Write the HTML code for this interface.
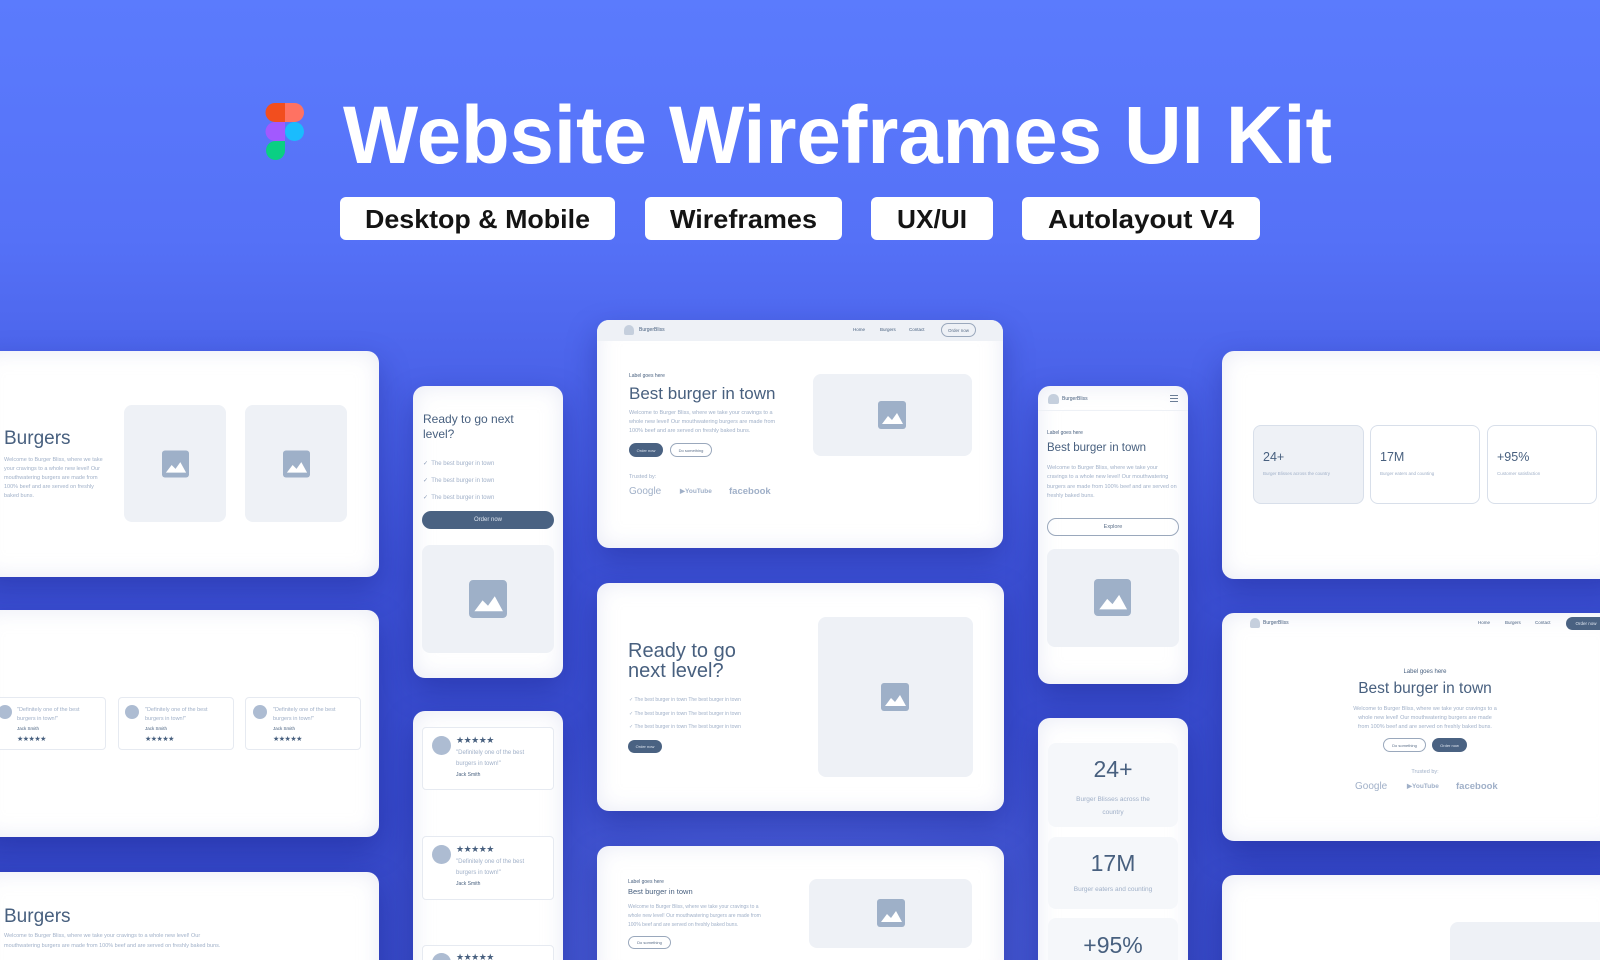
<!DOCTYPE html>
<html><head><meta charset="utf-8"><style>
*{margin:0;padding:0;box-sizing:border-box}
html,body{width:1600px;height:960px;overflow:hidden}
body{font-family:"Liberation Sans",sans-serif;background:#3a4bd0}
#w{position:absolute;left:0;top:0;width:1600px;height:960px;overflow:hidden;
background:radial-gradient(ellipse 500px 260px at 800px 960px,rgba(110,130,240,.5),rgba(0,0,0,0)),linear-gradient(180deg,#5b7bfd 0%,#5571f7 25%,#4a62e8 40%,#3c50d4 60%,#3345c4 100%)}
.a{position:absolute}
.c{position:absolute;background:#fff;border-radius:12px;box-shadow:inset 0 0 22px rgba(190,196,225,.35),0 12px 30px rgba(20,30,130,.35);overflow:hidden}
.ph{position:absolute;background:#eef1f6;border-radius:8px}
.t{position:absolute;white-space:nowrap;line-height:1}
.d{color:#48607f}
.l{color:#a0b0c8}
.btn{position:absolute;background:#4a6282;border-radius:20px;color:#dfe6f0;font-size:5px;display:flex;align-items:center;justify-content:center}
.ob{position:absolute;border:1px solid #9aa8bc;border-radius:20px;color:#5a6e88;font-size:5px;display:flex;align-items:center;justify-content:center}
.box{position:absolute;border:1px solid #e6eaf1;border-radius:4px;background:#fff}
.av{position:absolute;border-radius:50%;background:#adbcd2}
.pill{position:absolute;background:#fff;border-radius:6px;top:197px;height:43px}
</style></head><body><div id="w">

<svg class="a" style="left:265px;top:103px" width="40" height="58" viewBox="0 0 40 58">
<path d="M10 0H20V19H10A9.5 9.5 0 0 1 10 0Z" fill="#f24e1e"/>
<path d="M20 0H29.5A9.5 9.5 0 0 1 29.5 19H20Z" fill="#ff7262"/>
<path d="M10 19H20V38H10A9.5 9.5 0 0 1 10 19Z" fill="#a259ff"/>
<circle cx="29.5" cy="28.5" r="9.5" fill="#1abcfe"/>
<path d="M10 38H20V48A9.5 9.5 0 1 1 10 38Z" fill="#0acf83"/>
</svg>
<svg class="a" style="left:0;top:0" width="1600" height="260">
<text x="343" y="163" font-family="Liberation Sans" font-weight="bold" font-size="82" fill="#fff" textLength="989" lengthAdjust="spacingAndGlyphs">Website Wireframes UI Kit</text>
</svg>
<div class="pill" style="left:340px;width:275px"></div>
<div class="pill" style="left:645px;width:197px"></div>
<div class="pill" style="left:871px;width:122px"></div>
<div class="pill" style="left:1022px;width:238px"></div>
<svg class="a" style="left:0;top:0" width="1600" height="260" font-family="Liberation Sans" font-weight="bold" font-size="26" fill="#141414">
<text x="365" y="228" textLength="225" lengthAdjust="spacingAndGlyphs">Desktop &amp; Mobile</text>
<text x="670" y="228" textLength="147" lengthAdjust="spacingAndGlyphs">Wireframes</text>
<text x="897" y="228" textLength="70" lengthAdjust="spacingAndGlyphs">UX/UI</text>
<text x="1048" y="228" textLength="186" lengthAdjust="spacingAndGlyphs">Autolayout V4</text>
</svg>

<div class="c" style="left:-20px;top:351px;width:399px;height:226px"></div>
<div class="c" style="left:-20px;top:610px;width:399px;height:227px"></div>
<div class="c" style="left:-20px;top:872px;width:399px;height:120px"></div>
<div class="c" style="left:413px;top:386px;width:150px;height:292px"></div>
<div class="c" style="left:413px;top:711px;width:150px;height:280px"></div>
<div class="c" style="left:597px;top:320px;width:406px;height:228px"></div>
<div class="c" style="left:597px;top:583px;width:407px;height:228px"></div>
<div class="c" style="left:597px;top:846px;width:407px;height:140px"></div>
<div class="c" style="left:1038px;top:386px;width:150px;height:298px"></div>
<div class="c" style="left:1038px;top:718px;width:150px;height:270px"></div>
<div class="c" style="left:1222px;top:351px;width:400px;height:228px"></div>
<div class="c" style="left:1222px;top:613px;width:400px;height:228px"></div>
<div class="c" style="left:1222px;top:875px;width:400px;height:120px"></div>

<div class="t d" style="left:4px;top:429px;font-size:19px">Burgers</div>
<div class="t l" style="left:4px;top:456px;font-size:5.5px;line-height:9px;white-space:normal;width:104px">Welcome to Burger Bliss, where we take your cravings to a whole new level! Our mouthwatering burgers are made from 100% beef and are served on freshly baked buns.</div>
<div class="ph" style="left:124px;top:405px;width:102px;height:117px"></div>
<div class="ph" style="left:245px;top:405px;width:102px;height:117px"></div>
<svg class="a" style="left:162px;top:450px" width="27" height="28" viewBox="0 0 28 28"><rect width="28" height="28" rx="3" fill="#9eb0c8"/><path d="M4 23L10 15L14 19L19 12L25 23Z" fill="#fff"/></svg>
<svg class="a" style="left:283px;top:450px" width="27" height="28" viewBox="0 0 28 28"><rect width="28" height="28" rx="3" fill="#9eb0c8"/><path d="M4 23L10 15L14 19L19 12L25 23Z" fill="#fff"/></svg>

<div class="box" style="left:-10px;top:697px;width:116px;height:53px"></div>
<div class="box" style="left:118px;top:697px;width:116px;height:53px"></div>
<div class="box" style="left:245px;top:697px;width:116px;height:53px"></div>
<div class="av" style="left:-2px;top:705px;width:14px;height:14px"></div>
<div class="av" style="left:125px;top:705px;width:14px;height:14px"></div>
<div class="av" style="left:253px;top:705px;width:14px;height:14px"></div>
<div class="t l" style="left:17px;top:706px;font-size:5.5px;line-height:9px">"Definitely one of the best<br>burgers in town!"</div>
<div class="t l" style="left:145px;top:706px;font-size:5.5px;line-height:9px">"Definitely one of the best<br>burgers in town!"</div>
<div class="t l" style="left:273px;top:706px;font-size:5.5px;line-height:9px">"Definitely one of the best<br>burgers in town!"</div>
<div class="t d" style="left:17px;top:727px;font-size:4.5px">Jack Smith</div>
<div class="t d" style="left:145px;top:727px;font-size:4.5px">Jack Smith</div>
<div class="t d" style="left:273px;top:727px;font-size:4.5px">Jack Smith</div>
<div class="t d" style="left:17px;top:736px;font-size:7px;letter-spacing:-.5px">★★★★★</div>
<div class="t d" style="left:145px;top:736px;font-size:7px;letter-spacing:-.5px">★★★★★</div>
<div class="t d" style="left:273px;top:736px;font-size:7px;letter-spacing:-.5px">★★★★★</div>

<div class="t d" style="left:4px;top:907px;font-size:19px">Burgers</div>
<div class="t l" style="left:4px;top:932px;font-size:5.5px;line-height:9.5px;white-space:normal;width:226px">Welcome to Burger Bliss, where we take your cravings to a whole new level! Our mouthwatering burgers are made from 100% beef and are served on freshly baked buns.</div>

<div class="t d" style="left:423px;top:412px;font-size:12px;line-height:15px">Ready to go next<br>level?</div>
<div class="t l" style="left:423px;top:456px;font-size:6px;line-height:17px"><span style="color:#8a9cb6">✓</span>&nbsp; The best burger in town<br><span style="color:#8a9cb6">✓</span>&nbsp; The best burger in town<br><span style="color:#8a9cb6">✓</span>&nbsp; The best burger in town</div>
<div class="btn" style="left:422px;top:511px;width:132px;height:18px;font-size:6px">Order now</div>
<div class="ph" style="left:422px;top:545px;width:132px;height:108px"></div>
<svg class="a" style="left:469px;top:580px" width="38" height="38" viewBox="0 0 28 28"><rect width="28" height="28" rx="3" fill="#9eb0c8"/><path d="M4 23L10 15L14 19L19 12L25 23Z" fill="#fff"/></svg>

<div class="box" style="left:422px;top:727px;width:132px;height:63px"></div>
<div class="box" style="left:422px;top:836px;width:132px;height:64px"></div>
<div class="box" style="left:422px;top:945px;width:132px;height:40px"></div>
<div class="av" style="left:432px;top:736px;width:19px;height:19px"></div>
<div class="av" style="left:432px;top:845px;width:19px;height:19px"></div>
<div class="av" style="left:432px;top:953px;width:19px;height:19px"></div>
<div class="t d" style="left:456px;top:736px;font-size:9px;letter-spacing:-.5px">★★★★★</div>
<div class="t d" style="left:456px;top:845px;font-size:9px;letter-spacing:-.5px">★★★★★</div>
<div class="t d" style="left:456px;top:953px;font-size:9px;letter-spacing:-.5px">★★★★★</div>
<div class="t l" style="left:456px;top:748px;font-size:6px;line-height:11px">"Definitely one of the best<br>burgers in town!"</div>
<div class="t l" style="left:456px;top:857px;font-size:6px;line-height:11px">"Definitely one of the best<br>burgers in town!"</div>
<div class="t d" style="left:456px;top:773px;font-size:5px">Jack Smith</div>
<div class="t d" style="left:456px;top:882px;font-size:5px">Jack Smith</div>

<div class="a" style="left:597px;top:320px;width:406px;height:21px;background:#eef1f6;border-radius:12px 12px 0 0"></div>
<div class="a" style="left:624px;top:325px;width:10px;height:10px;border-radius:5px 5px 2px 2px;background:#c5cfdd"></div>
<div class="t d" style="left:639px;top:328px;font-size:5px">BurgerBliss</div>
<div class="t d" style="left:853px;top:328px;font-size:4.5px">Home</div>
<div class="t d" style="left:880px;top:328px;font-size:4.5px">Burgers</div>
<div class="t d" style="left:909px;top:328px;font-size:4.5px">Contact</div>
<div class="ob" style="left:941px;top:323px;width:35px;height:14px;font-size:4.5px">Order now</div>
<div class="t d" style="left:629px;top:374px;font-size:5px">Label goes here</div>
<div class="t d" style="left:629px;top:385px;font-size:17px">Best burger in town</div>
<div class="t l" style="left:629px;top:409px;font-size:5.5px;line-height:9px">Welcome to Burger Bliss, where we take your cravings to a<br>whole new level! Our mouthwatering burgers are made from<br>100% beef and are served on freshly baked buns.</div>
<div class="btn" style="left:629px;top:443px;width:34px;height:14px;font-size:4px">Order now</div>
<div class="ob" style="left:670px;top:443px;width:42px;height:14px;font-size:4px">Do something</div>
<div class="t l" style="left:629px;top:475px;font-size:5.5px">Trusted by:</div>
<div class="t l" style="left:629px;top:487px;font-size:10px">Google</div>
<div class="t l" style="left:680px;top:489px;font-size:6.5px;font-weight:bold">▶YouTube</div>
<div class="t l" style="left:729px;top:487px;font-size:9.5px;font-weight:bold">facebook</div>
<div class="ph" style="left:813px;top:374px;width:159px;height:82px"></div>
<svg class="a" style="left:878px;top:401px" width="28" height="28" viewBox="0 0 28 28"><rect width="28" height="28" rx="3" fill="#9eb0c8"/><path d="M4 23L10 15L14 19L19 12L25 23Z" fill="#fff"/></svg>

<div class="t d" style="left:628px;top:641px;font-size:20px;line-height:20px">Ready to go<br>next level?</div>
<div class="t l" style="left:629px;top:694px;font-size:5px;line-height:13.5px">✓ The best burger in town The best burger in town<br>✓ The best burger in town The best burger in town<br>✓ The best burger in town The best burger in town</div>
<div class="btn" style="left:628px;top:740px;width:34px;height:13px;font-size:4px">Order now</div>
<div class="ph" style="left:818px;top:617px;width:155px;height:160px"></div>
<svg class="a" style="left:881px;top:683px" width="28" height="28" viewBox="0 0 28 28"><rect width="28" height="28" rx="3" fill="#9eb0c8"/><path d="M4 23L10 15L14 19L19 12L25 23Z" fill="#fff"/></svg>

<div class="t d" style="left:628px;top:880px;font-size:5px">Label goes here</div>
<div class="t d" style="left:628px;top:888px;font-size:7.5px">Best burger in town</div>
<div class="t l" style="left:628px;top:903px;font-size:5px;line-height:9px">Welcome to Burger Bliss, where we take your cravings to a<br>whole new level! Our mouthwatering burgers are made from<br>100% beef and are served on freshly baked buns.</div>
<div class="ob" style="left:628px;top:936px;width:43px;height:13px;font-size:4px">Do something</div>
<div class="ph" style="left:809px;top:879px;width:163px;height:69px"></div>
<svg class="a" style="left:877px;top:899px" width="28" height="28" viewBox="0 0 28 28"><rect width="28" height="28" rx="3" fill="#9eb0c8"/><path d="M4 23L10 15L14 19L19 12L25 23Z" fill="#fff"/></svg>

<div class="a" style="left:1048px;top:394px;width:11px;height:10px;border-radius:5px 5px 2px 2px;background:#c5cfdd"></div>
<div class="t d" style="left:1062px;top:397px;font-size:5px">BurgerBliss</div>
<div class="a" style="left:1170px;top:395px;width:8px;height:7px;border-top:1px solid #6a7d96;border-bottom:1px solid #6a7d96"></div>
<div class="a" style="left:1170px;top:398px;width:8px;height:1px;background:#6a7d96"></div>
<div class="a" style="left:1038px;top:410px;width:150px;height:1px;background:#eef1f6"></div>
<div class="t d" style="left:1047px;top:431px;font-size:5px">Label goes here</div>
<div class="t d" style="left:1047px;top:443px;font-size:11.5px">Best burger in town</div>
<div class="t l" style="left:1047px;top:464px;font-size:5.5px;line-height:9.3px;white-space:normal;width:132px">Welcome to Burger Bliss, where we take your cravings to a whole new level! Our mouthwatering burgers are made from 100% beef and are served on freshly baked buns.</div>
<div class="ob" style="left:1047px;top:518px;width:132px;height:18px;font-size:5.5px">Explore</div>
<div class="ph" style="left:1047px;top:549px;width:132px;height:98px"></div>
<svg class="a" style="left:1094px;top:579px" width="37" height="37" viewBox="0 0 28 28"><rect width="28" height="28" rx="3" fill="#9eb0c8"/><path d="M4 23L10 15L14 19L19 12L25 23Z" fill="#fff"/></svg>

<div class="ph" style="left:1048px;top:743px;width:130px;height:84px;background:#f5f7fa"></div>
<div class="ph" style="left:1048px;top:837px;width:130px;height:72px;background:#f5f7fa"></div>
<div class="ph" style="left:1048px;top:918px;width:130px;height:60px;background:#f5f7fa"></div>
<div class="t d" style="left:1048px;width:130px;text-align:center;top:758px;font-size:23px">24+</div>
<div class="t l" style="left:1048px;width:130px;text-align:center;top:793px;font-size:6.5px;line-height:13px">Burger Blisses across the<br>country</div>
<div class="t d" style="left:1048px;width:130px;text-align:center;top:852px;font-size:23px">17M</div>
<div class="t l" style="left:1048px;width:130px;text-align:center;top:887px;font-size:6.5px">Burger eaters and counting</div>
<div class="t d" style="left:1048px;width:130px;text-align:center;top:934px;font-size:23px">+95%</div>

<div class="ph" style="left:1253px;top:425px;width:111px;height:79px;border:1px solid #d8dfea"></div>
<div class="a" style="left:1370px;top:425px;width:110px;height:79px;border:1px solid #d8dfea;border-radius:8px"></div>
<div class="a" style="left:1487px;top:425px;width:110px;height:79px;border:1px solid #d8dfea;border-radius:8px"></div>
<div class="t d" style="left:1263px;top:451px;font-size:12.5px">24+</div>
<div class="t d" style="left:1380px;top:451px;font-size:12.5px">17M</div>
<div class="t d" style="left:1497px;top:451px;font-size:12.5px">+95%</div>
<div class="t l" style="left:1263px;top:472px;font-size:4.5px">Burger Blisses across the country</div>
<div class="t l" style="left:1380px;top:472px;font-size:4.5px">Burger eaters and counting</div>
<div class="t l" style="left:1497px;top:472px;font-size:4.5px">Customer satisfaction</div>

<div class="a" style="left:1250px;top:618px;width:10px;height:10px;border-radius:5px 5px 2px 2px;background:#c5cfdd"></div>
<div class="t d" style="left:1263px;top:621px;font-size:5px">BurgerBliss</div>
<div class="t d" style="left:1478px;top:621px;font-size:4.5px">Home</div>
<div class="t d" style="left:1505px;top:621px;font-size:4.5px">Burgers</div>
<div class="t d" style="left:1535px;top:621px;font-size:4.5px">Contact</div>
<div class="btn" style="left:1566px;top:617px;width:40px;height:13px;font-size:4.5px">Order now</div>
<div class="t d" style="left:1322px;width:206px;text-align:center;top:669px;font-size:6px">Label goes here</div>
<div class="t d" style="left:1322px;width:206px;text-align:center;top:681px;font-size:15.5px">Best burger in town</div>
<div class="t l" style="left:1322px;width:206px;text-align:center;top:705px;font-size:5.5px;line-height:9px">Welcome to Burger Bliss, where we take your cravings to a<br>whole new level! Our mouthwatering burgers are made<br>from 100% beef and are served on freshly baked buns.</div>
<div class="ob" style="left:1383px;top:738px;width:43px;height:14px;font-size:4px">Do something</div>
<div class="btn" style="left:1432px;top:738px;width:35px;height:14px;font-size:4px">Order now</div>
<div class="t l" style="left:1322px;width:206px;text-align:center;top:770px;font-size:5.5px">Trusted by:</div>
<div class="t l" style="left:1355px;top:782px;font-size:10px">Google</div>
<div class="t l" style="left:1407px;top:784px;font-size:6.5px;font-weight:bold">▶YouTube</div>
<div class="t l" style="left:1456px;top:782px;font-size:9.5px;font-weight:bold">facebook</div>

<div class="ph" style="left:1450px;top:922px;width:160px;height:60px"></div>
</div></body></html>
